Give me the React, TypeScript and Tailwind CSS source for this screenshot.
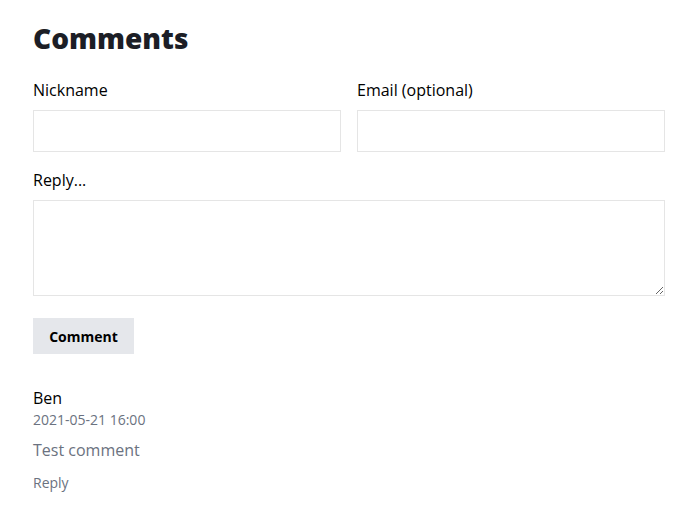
import React from "react";

export default function App() {
  return (
    <div className="bg-white min-h-[519px] pt-[20px]" style={{ fontFamily: '"Open Sans", sans-serif' }}>
      <div className="ml-[33px] w-[632px]">
        <h2 className="text-[28px] leading-[36px] font-extrabold text-[#1c1e26]" style={{ fontFamily: '"Open Sans", sans-serif' }}>
          Comments
        </h2>
        <div className="grid grid-cols-2 gap-4 mt-[22px]">
          <label className="flex flex-col">
            <span className="text-[16px] leading-[24px] text-black">Nickname</span>
            <input className="mt-[8px] h-[42px] border border-[#e5e5e5] outline-none" />
          </label>
          <label className="flex flex-col">
            <span className="text-[16px] leading-[24px] text-black">Email (optional)</span>
            <input className="mt-[8px] h-[42px] border border-[#e5e5e5] outline-none" />
          </label>
        </div>
        <label className="flex flex-col mt-[16px]">
          <span className="text-[16px] leading-[24px] text-black">Reply...</span>
          <textarea className="mt-[8px] h-[96px] border border-[#e5e5e5] outline-none" />
        </label>
        <button className="mt-[22px] h-[36px] w-[101px] bg-[#e5e7eb] text-[14px] font-bold text-black">
          Comment
        </button>
        <div className="mt-[32px]">
          <div className="text-[16px] leading-[24px] text-black">Ben</div>
          <div className="text-[14px] leading-[20px] text-[#6b7280]">2021-05-21 16:00</div>
          <div className="mt-[8px] text-[16px] leading-[24px] text-[#6b7280]">Test comment</div>
          <div className="mt-[11px] text-[14px] leading-[20px] text-[#6b7280]">Reply</div>
        </div>
      </div>
    </div>
  );
}
